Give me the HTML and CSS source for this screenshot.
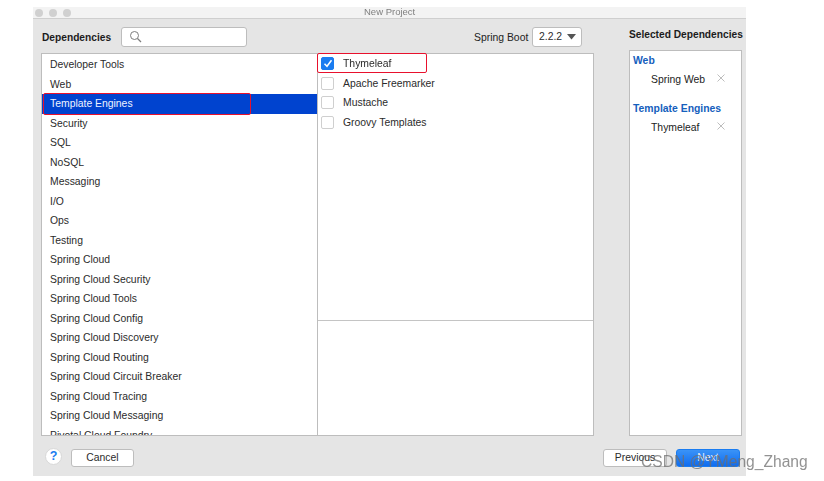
FILE: index.html
```html
<!DOCTYPE html>
<html lang="en">
<head>
<meta charset="utf-8">
<title>New Project</title>
<link rel="stylesheet" href="styles.css">
</head>
<body>
<div class="window">
  <div class="titlebar">
    <div class="lights"><i></i><i></i><i></i></div>
    <div class="title">New Project</div>
  </div>
  <div class="content">
    <div class="main">
      <div class="toolbar">
        <b class="heading">Dependencies</b>
        <div class="search">
          <svg width="13" height="13" viewBox="0 0 13 13"><circle cx="5.5" cy="5.5" r="4" fill="none" stroke="#7d7d7d" stroke-width="1"/><path d="M8.5 8.5L12 12" stroke="#7d7d7d" stroke-width="1.2"/></svg>
        </div>
        <span class="boot-label">Spring Boot</span>
        <div class="select"><span>2.2.2</span><svg width="9" height="6" viewBox="0 0 9 6"><path d="M0 0H9L4.5 5.5Z" fill="#555"/></svg></div>
      </div>
      <div class="lists">
        <div class="cats">
          <div class="cat">Developer Tools</div>
          <div class="cat">Web</div>
          <div class="cat active">Template Engines<span class="mark mark-cat"></span></div>
          <div class="cat">Security</div>
          <div class="cat">SQL</div>
          <div class="cat">NoSQL</div>
          <div class="cat">Messaging</div>
          <div class="cat">I/O</div>
          <div class="cat">Ops</div>
          <div class="cat">Testing</div>
          <div class="cat">Spring Cloud</div>
          <div class="cat">Spring Cloud Security</div>
          <div class="cat">Spring Cloud Tools</div>
          <div class="cat">Spring Cloud Config</div>
          <div class="cat">Spring Cloud Discovery</div>
          <div class="cat">Spring Cloud Routing</div>
          <div class="cat">Spring Cloud Circuit Breaker</div>
          <div class="cat">Spring Cloud Tracing</div>
          <div class="cat">Spring Cloud Messaging</div>
          <div class="cat">Pivotal Cloud Foundry</div>
        </div>
        <div class="deps">
          <div class="dep-list">
            <div class="dep"><span class="box checked"><svg width="10" height="9" viewBox="0 0 10 9"><path d="M1.5 4.8L4 7.3L8.5 1.3" fill="none" stroke="#fff" stroke-width="1.5"/></svg></span>Thymeleaf<span class="mark mark-dep"></span></div>
            <div class="dep"><span class="box"></span>Apache Freemarker</div>
            <div class="dep"><span class="box"></span>Mustache</div>
            <div class="dep"><span class="box"></span>Groovy Templates</div>
          </div>
          <div class="dep-desc"></div>
        </div>
      </div>
    </div>
    <div class="side">
      <b class="side-title">Selected Dependencies</b>
      <div class="side-panel">
        <div class="group">Web</div>
        <div class="picked"><span>Spring Web</span><svg class="remove" width="8" height="8" viewBox="0 0 8 8"><path d="M.5.5L7.5 7.5M7.5.5L.5 7.5" stroke="#bdbdbd" stroke-width="1"/></svg></div>
        <div class="group group-next">Template Engines</div>
        <div class="picked"><span>Thymeleaf</span><svg class="remove" width="8" height="8" viewBox="0 0 8 8"><path d="M.5.5L7.5 7.5M7.5.5L.5 7.5" stroke="#bdbdbd" stroke-width="1"/></svg></div>
      </div>
    </div>
  </div>
  <div class="footer">
    <div class="help">?</div>
    <div class="btn">Cancel</div>
    <div class="spacer"></div>
    <div class="btn btn-prev">Previous</div>
    <div class="btn btn-next">Next</div>
  </div>
</div>
<div class="watermark">CSDN @YMeng_Zhang</div>
</body>
</html>
```
FILE: styles.css
```css
* { box-sizing: border-box; }
html, body { margin: 0; padding: 0; background: #fff; }
body {
  width: 824px;
  height: 481px;
  padding: 7px 0 0 33px;
  overflow: hidden;
  font-family: "Liberation Sans", Arial, sans-serif;
  font-size: 10.4px;
  color: #2b2b2b;
  position: relative;
}
.window {
  width: 713px;
  height: 469px;
  background: #e5e5e5;
  display: flex;
  flex-direction: column;
  filter: blur(0.35px);
}
.titlebar {
  height: 12px;
  flex: none;
  background: #f3f3f3;
  border-bottom: 1px solid #cfcfcf;
  display: flex;
  align-items: center;
  position: relative;
}
.lights { display: flex; gap: 6px; padding-left: 2px; }
.lights i { width: 8px; height: 8px; border-radius: 50%; background: #d0d0d0; display: block; }
.title {
  position: absolute;
  left: 331px;
  top: -1px;
  font-size: 9.5px;
  color: #808080;
  line-height: 12px;
}
.content {
  height: 417px;
  flex: none;
  display: flex;
  padding-left: 8px;
  padding-right: 4px;
}
.main { width: 553px; flex: none; display: flex; flex-direction: column; }
.toolbar { height: 34px; flex: none; display: flex; align-items: center; padding-top: 2px; }
.heading { font-size: 10.2px; color: #1c1c1c; width: 80px; padding-left: 1px; }
.search {
  width: 126px;
  height: 20px;
  margin-top: -1px;
  background: #fff;
  border: 1px solid #bdbdbd;
  border-radius: 3px;
  display: flex;
  align-items: center;
  padding-left: 7px;
}
.boot-label { margin-left: 227px; width: 58px; font-size: 10.4px; color: #222; }
.select {
  width: 50px;
  height: 20px;
  margin-top: -1px;
  background: #fff;
  border: 1px solid #bdbdbd;
  border-radius: 3px;
  display: flex;
  align-items: center;
  justify-content: space-between;
  padding: 0 5px 0 6px;
  font-size: 10.4px;
}
.lists { height: 383px; display: flex; flex: none; }
.cats {
  width: 277px;
  flex: none;
  background: #fff;
  border: 1px solid #bdbdbd;
  overflow: hidden;
  padding-top: 1px;
}
.cat {
  height: 19.5px;
  line-height: 19px;
  padding-left: 8px;
  position: relative;
  white-space: nowrap;
}
.cat.active { background: #0043cf; color: #eef3ff; }
.mark {
  position: absolute;
  border: 1.5px solid #e8112d;
  border-radius: 2px;
  z-index: 2;
}
.mark-cat { left: 1px; top: -1px; width: 208px; height: 22px; }
.deps {
  flex: 1;
  background: #fff;
  border: 1px solid #bdbdbd;
  border-left: 0;
  display: flex;
  flex-direction: column;
}
.dep-list { height: 267px; border-bottom: 1px solid #c4c4c4; flex: none; }
.dep {
  height: 19.5px;
  display: flex;
  align-items: center;
  gap: 9px;
  padding-left: 3px;
  position: relative;
}
.box {
  width: 13px;
  height: 13px;
  flex: none;
  background: #fff;
  border: 1px solid #cfcfcf;
  border-radius: 2px;
  display: flex;
  align-items: center;
  justify-content: center;
}
.box.checked { background: #1a7cf0; border-color: #1a7cf0; }
.mark-dep { left: -1px; top: -1px; width: 110px; height: 20px; }
.dep-desc { flex: 1; }
.side { margin-left: 35px; width: 113px; flex: none; display: flex; flex-direction: column; }
.side-title { height: 31px; flex: none; padding-top: 9px; font-size: 10.2px; color: #1c1c1c; white-space: nowrap; line-height: 13px; }
.side-panel {
  height: 386px;
  flex: none;
  background: #fff;
  border: 1px solid #bdbdbd;
  padding: 3px 0 0 3px;
}
.group { color: #1560bd; font-weight: bold; height: 15px; line-height: 14px; }
.group-next { margin-top: 13px; }
.picked { height: 20px; display: flex; align-items: center; padding-left: 18px; color: #222; }
.picked span { width: 66px; }
.remove { margin-top: -2px; }
.footer {
  flex: 1;
  display: flex;
  align-items: flex-start;
  padding: 13px 6px 0 12px;
}
.help {
  width: 17px;
  height: 17px;
  margin-top: -1px;
  border-radius: 50%;
  background: #fff;
  border: 1px solid #d8d8d8;
  color: #1a7cf0;
  font-weight: bold;
  font-size: 12.5px;
  line-height: 15px;
  text-align: center;
}
.btn {
  width: 63px;
  height: 18px;
  margin-left: 9px;
  background: #fff;
  border: 1px solid #bdbdbd;
  border-radius: 3px;
  text-align: center;
  line-height: 16px;
}
.spacer { flex: 1; }
.btn-prev { width: 64px; margin-left: 0; }
.btn-next {
  width: 64px;
  margin-left: 9px;
  background: linear-gradient(#3a93f7, #0f6cf0);
  border-color: #1a7cf0;
  color: #e6f0ff;
}
.watermark {
  position: absolute;
  left: 641px;
  top: 452px;
  font-size: 15.6px;
  line-height: 20px;
  color: rgba(110, 110, 110, 0.75);
  white-space: nowrap;
  filter: blur(0.3px);
}
```
